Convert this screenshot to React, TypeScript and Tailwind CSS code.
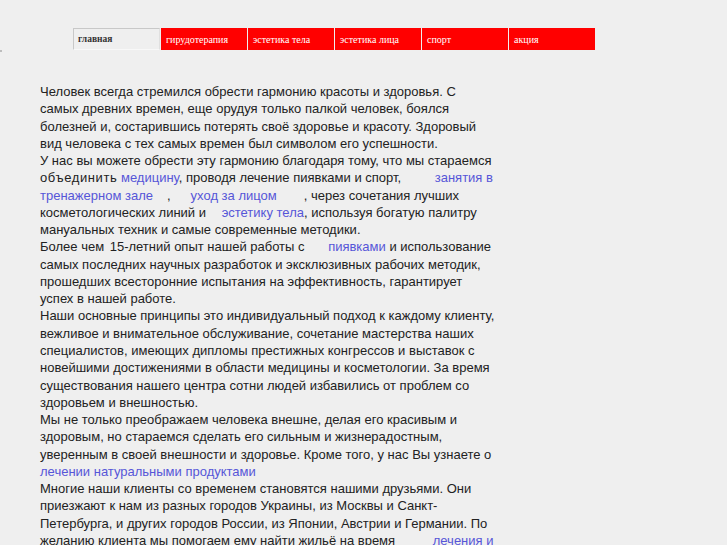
import React from 'react';

const tabs = ['гирудотерапия', 'эстетика тела', 'эстетика лица', 'спорт', 'акция'];

function A({ children }: { children: React.ReactNode }) {
  return <a className="text-[#5656d8]">{children}</a>;
}

function Gap({ w }: { w: string }) {
  return <span className={`inline-block ${w}`} />;
}

export default function App() {
  return (
    <div className="min-h-[545px] bg-[#efefef] relative overflow-hidden">
      <div className="absolute left-0 top-[50px] w-[2px] h-[2px] bg-[#bdbdbd]" />
      <div className="pt-[28px] pl-[73px] flex gap-[1px]">
        <div className="w-[87px] h-[22px] border border-t-[#c8c8c8] border-l-[#c8c8c8] border-r-[#e0e0e0] border-b-[#f8f8f8] bg-[#efefef] pl-[4px] flex items-center text-[9.5px] font-bold text-[#333] font-['Liberation_Serif',serif]">
          главная
        </div>
        {tabs.map((t) => (
          <div
            key={t}
            className="w-[86px] h-[22px] bg-[#ff0000] pl-[5px] flex items-center text-[10px] text-white font-['Liberation_Serif',serif]"
          >
            {t}
          </div>
        ))}
      </div>

      <div className="pl-[40px] pt-[33px] text-[13px] leading-[17.27px] text-[#222] font-['Liberation_Sans',Arial,sans-serif] whitespace-nowrap">
        <div>Человек всегда стремился обрести гармонию красоты и здоровья. С</div>
        <div>самых древних времен, еще орудуя только палкой человек, боялся</div>
        <div>болезней и, состарившись потерять своё здоровье и красоту. Здоровый</div>
        <div>вид человека с тех самых времен был символом его успешности.</div>
        <div>У нас вы можете обрести эту гармонию благодаря тому, что мы стараемся</div>
        <div>
          <span className="tracking-[0.6px]">объединить</span> <A>медицину</A>, проводя лечение пиявками и спорт,
          <Gap w="w-[30px]" /> <A>занятия в</A>
        </div>
        <div>
          <A>тренажерном зале</A>
          <Gap w="w-[14px]" />,<Gap w="w-[20px]" /><A>уход за лицом</A>
          <Gap w="w-[27px]" />, через сочетания лучших
        </div>
        <div>
          косметологических линий и <Gap w="w-[12px]" /><A>эстетику тела</A>, используя богатую палитру
        </div>
        <div>мануальных техник и самые современные методики.</div>
        <div>
          Более чем <Gap w="w-[2px]" />15-летний опыт нашей работы с <Gap w="w-[20px]" />
          <A>пиявками</A> и использование
        </div>
        <div>самых последних научных разработок и эксклюзивных рабочих методик,</div>
        <div>прошедших всесторонние испытания на эффективность, гарантирует</div>
        <div>успех в нашей работе.</div>
        <div>Наши основные принципы это индивидуальный подход к каждому клиенту,</div>
        <div>вежливое и внимательное обслуживание, сочетание мастерства наших</div>
        <div>специалистов, имеющих дипломы престижных конгрессов и выставок с</div>
        <div>новейшими достижениями в области медицины и косметологии. За время</div>
        <div>существования нашего центра сотни людей избавились от проблем со</div>
        <div>здоровьем и внешностью.</div>
        <div>Мы не только преображаем человека внешне, делая его красивым и</div>
        <div>здоровым, но стараемся сделать его сильным и жизнерадостным,</div>
        <div>уверенным в своей внешности и здоровье. Кроме того, у нас Вы узнаете о</div>
        <div>
          <A>лечении натуральными продуктами</A>
        </div>
        <div>Многие наши клиенты со временем становятся нашими друзьями. Они</div>
        <div>приезжают к нам из разных городов Украины, из Москвы и Санкт-</div>
        <div>Петербурга, и других городов России, из Японии, Австрии и Германии. По</div>
        <div>
          желанию клиента мы помогаем ему найти жильё на время <Gap w="w-[34px]" />
          <A>лечения и</A>
        </div>
      </div>
    </div>
  );
}
